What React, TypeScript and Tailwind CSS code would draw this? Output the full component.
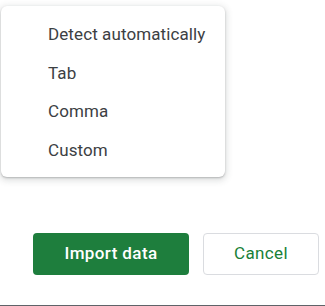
const options = ['Detect automatically', 'Tab', 'Comma', 'Custom']

export default function App() {
  return (
    <div className="relative flex h-[306px] w-[325px] flex-col overflow-hidden bg-white font-['Roboto',sans-serif]">
      <div className="flex-1" />
      <div className="flex gap-[14px] pl-[33px]">
        <button className="h-[42px] w-[156px] rounded-[4px] bg-[#1e7e3d] text-[17px] font-medium tracking-[0.4px] text-white">
          Import data
        </button>
        <button className="h-[42px] w-[116px] rounded-[4px] border border-[#dadce0] bg-white text-[17px] tracking-[0.4px] text-[#188038]">
          Cancel
        </button>
      </div>
      <div className="h-[31px] border-b border-[#5f6368]" />

      <div className="absolute left-[1px] top-[6px] w-[224px] rounded-[6px] bg-white pb-[7px] pt-[10px] shadow-[0_2px_6px_2px_rgba(60,64,67,0.15),0_1px_2px_rgba(60,64,67,0.3)]">
        {options.map((o) => (
          <div key={o} className="flex h-[38.4px] items-center pl-[47px] text-[17px] tracking-[0.1px] text-[#3c4043]">
            {o}
          </div>
        ))}
      </div>
    </div>
  )
}
